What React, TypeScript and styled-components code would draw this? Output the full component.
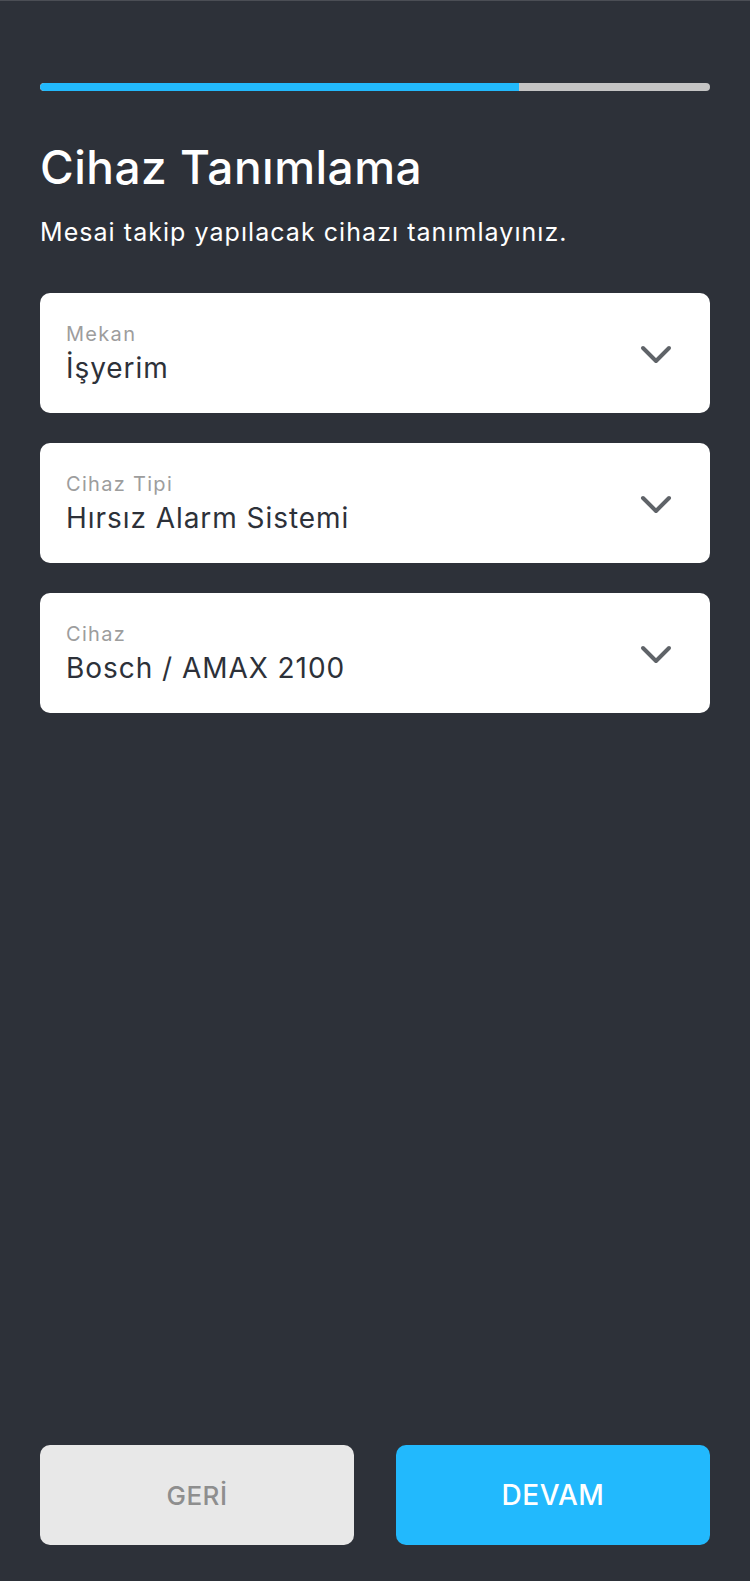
import * as React from "react";
import styled, { createGlobalStyle } from "styled-components";

const GlobalStyle = createGlobalStyle`
  html, body {
    margin: 0;
    padding: 0;
    background: #2d3139;
  }
  * {
    box-sizing: border-box;
  }
`;

const Page = styled.div`
  min-height: 1581px;
  display: flex;
  flex-direction: column;
  padding: 82px 40px 36px;
  background: #2d3139;
  border-top: 1px solid #4b4e55;
  font-family: Inter, "Noto Sans", sans-serif;
`;

const Progress = styled.div`
  height: 8px;
  border-radius: 4px;
  background: #c4c4c4;
  overflow: hidden;
  display: flex;
`;

const ProgressFill = styled.div`
  height: 100%;
  background: #22b9fc;
  border-radius: 4px 0 0 4px;
`;

const Title = styled.h1`
  margin: 48px 0 0;
  font-size: 46px;
  line-height: 56px;
  font-weight: 500;
  color: #ffffff;
  letter-spacing: 0.5px;
`;

const Subtitle = styled.p`
  margin: 22px 0 0;
  font-size: 25px;
  line-height: 30px;
  font-weight: 400;
  color: #ffffff;
  letter-spacing: 1.05px;
`;

const Fields = styled.div`
  margin-top: 46px;
  display: flex;
  flex-direction: column;
  gap: 30px;
`;

const SelectBox = styled.div`
  height: 120px;
  background: #ffffff;
  border-radius: 10px;
  display: flex;
  align-items: center;
  justify-content: space-between;
  padding: 0 38px 0 26px;

  svg {
    margin-top: 4px;
  }
`;

const FieldText = styled.div`
  display: flex;
  flex-direction: column;
`;

const FieldLabel = styled.span`
  font-size: 20px;
  line-height: 24px;
  color: #9d9d9d;
  letter-spacing: 1.3px;
`;

const FieldValue = styled.span`
  margin-top: 5px;
  font-size: 28px;
  line-height: 34px;
  color: #2d3139;
  letter-spacing: 0.95px;
`;

const Spacer = styled.div`
  flex: 1;
`;

const Actions = styled.div`
  display: grid;
  grid-template-columns: 1fr 1fr;
  gap: 42px;
`;

const ActionButton = styled.button<{ $primary?: boolean }>`
  height: 100px;
  border: none;
  border-radius: 10px;
  font-family: inherit;
  font-weight: 500;
  letter-spacing: 0.5px;
  font-size: ${({ $primary }) => ($primary ? "28px" : "26px")};
  background: ${({ $primary }) => ($primary ? "#22b9fd" : "#e8e8e8")};
  color: ${({ $primary }) => ($primary ? "#ffffff" : "#8e8e8e")};
`;

function Chevron() {
  return (
    <svg width="32" height="20" viewBox="0 0 32 20" fill="none">
      <path
        d="M3 3L16 16L29 3"
        stroke="#5f6368"
        strokeWidth="4"
        strokeLinecap="round"
        strokeLinejoin="round"
      />
    </svg>
  );
}

const fields = [
  { label: "Mekan", value: "İşyerim" },
  { label: "Cihaz Tipi", value: "Hırsız Alarm Sistemi" },
  { label: "Cihaz", value: "Bosch / AMAX 2100" },
];

export default function App() {
  const step = 5;
  const total = 7;
  return (
    <>
      <GlobalStyle />
      <Page>
        <Progress>
          <ProgressFill style={{ width: `${(step / total) * 100}%` }} />
        </Progress>
        <Title>Cihaz Tanımlama</Title>
        <Subtitle>Mesai takip yapılacak cihazı tanımlayınız.</Subtitle>
        <Fields>
          {fields.map((f) => (
            <SelectBox key={f.label}>
              <FieldText>
                <FieldLabel>{f.label}</FieldLabel>
                <FieldValue>{f.value}</FieldValue>
              </FieldText>
              <Chevron />
            </SelectBox>
          ))}
        </Fields>
        <Spacer />
        <Actions>
          <ActionButton>GERİ</ActionButton>
          <ActionButton $primary>DEVAM</ActionButton>
        </Actions>
      </Page>
    </>
  );
}
